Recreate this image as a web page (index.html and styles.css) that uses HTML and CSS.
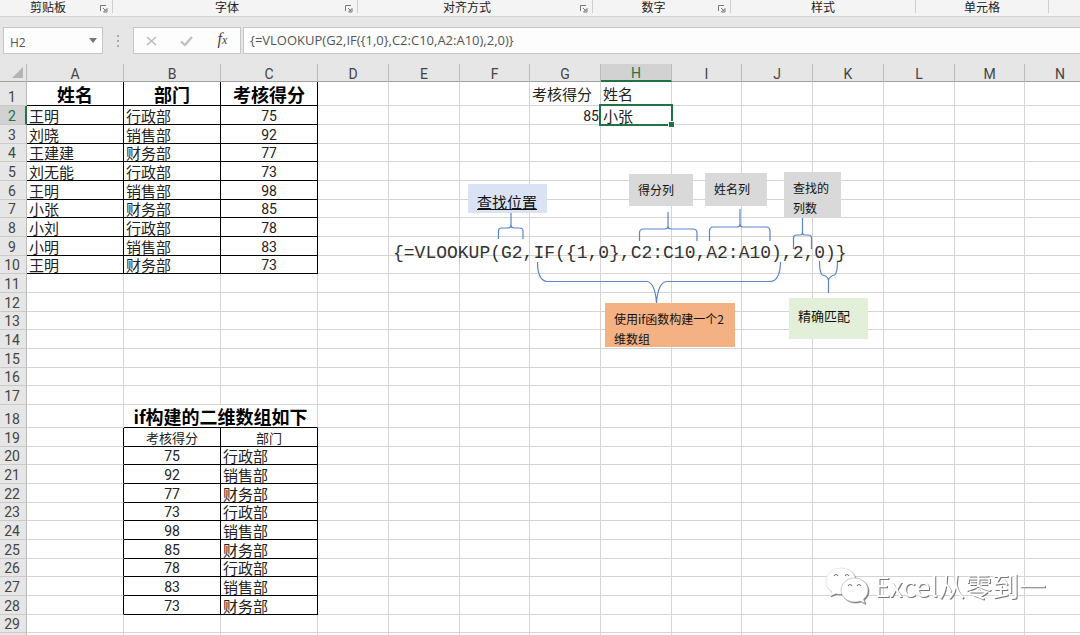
FILE: index.html
```html
<!DOCTYPE html>
<html lang="zh-CN">
<head>
<meta charset="utf-8">
<title>Excel</title>
<link rel="stylesheet" href="styles.css">
</head>
<body>
<svg class="defs" aria-hidden="true">
  <symbol id="launcher" viewBox="0 0 8 8"><path d="M.5 6V.5H6M3 3l3 3M7 3.500V7H3.500z" /></symbol>
</svg>

<header class="ribbon">
  <div class="group"><span>剪贴板</span><button class="launch" aria-label="剪贴板设置"><svg><use href="#launcher"/></svg></button></div>
  <div class="group"><span>字体</span><button class="launch" aria-label="字体设置"><svg><use href="#launcher"/></svg></button></div>
  <div class="group"><span>对齐方式</span><button class="launch" aria-label="对齐设置"><svg><use href="#launcher"/></svg></button></div>
  <div class="group"><span>数字</span><button class="launch" aria-label="数字格式"><svg><use href="#launcher"/></svg></button></div>
  <div class="group"><span>样式</span></div>
  <div class="group"><span>单元格</span></div>
  <div></div>
</header>

<section class="bar">
  <div class="name-box">
    <select aria-label="名称框"><option>H2</option></select>
    <svg class="caret" viewBox="0 0 8 5"><path d="M0 0h8L4 5z"/></svg>
  </div>
  <svg class="dots" viewBox="0 0 2 12"><path d="M0 0h2v2H0zM0 5h2v2H0zM0 10h2v2H0z"/></svg>
  <div class="tools">
    <button aria-label="取消"><svg viewBox="0 0 14 14"><path d="M2 3l9 8M11 3L2 11" stroke="#bdbdbd" stroke-width="1.600"/></svg></button>
    <button aria-label="输入"><svg viewBox="0 0 14 14"><path d="M1 7.500l4 3.500L12 3" stroke="#bdbdbd" stroke-width="2.200"/></svg></button>
    <button class="fx" aria-label="插入函数"><i>f</i><small>x</small></button>
  </div>
  <input class="formula-input" aria-label="编辑栏" value="{=VLOOKUP(G2,IF({1,0},C2:C10,A2:A10),2,0)}">
</section>

<main class="sheet">
  <table class="grid">
    <colgroup><col class="c-head"><col class="c-wide" span="3"><col class="c-71" span="2"><col class="c-70"><col class="c-71" span="2"><col class="c-70"><col class="c-71" span="3"><col class="c-70"><col></colgroup>
    <thead>
      <tr><th class="corner"><svg viewBox="0 0 11 11"><path d="M11 0v11H0z"/></svg></th><th>A</th><th>B</th><th>C</th><th>D</th><th>E</th><th>F</th><th>G</th><th class="active">H</th><th>I</th><th>J</th><th>K</th><th>L</th><th>M</th><th>N</th></tr>
    </thead>
    <tbody id="rows"></tbody>
  </table>

  <div class="canvas">
    <svg class="braces" viewBox="0 0 480 140">
      <path d="M108.500 75V67q0-3 3-3H118q3 0 3-3V49v12q0 3 3 3h6q3 0 3 3v8"/>
      <path d="M249.500 77V69q0-4 4-4H275q3 0 3-3V48v14q0 3 3 3h22q4 0 4 4v8"/>
      <path d="M319.500 77V67q0-4 4-4H347q3 0 3-3V45v15q0 3 3 3h23q4 0 4 4v10"/>
      <path d="M403.500 85V74q0-3 3-3h4q2 0 2-3V54v14q0 3 2 3h4q3 0 3 3v11"/>
      <path d="M147.500 98q0 19 10 19.500H256q9 0 10.500 21.500q1.500-21.500 11-21.500H380q10 0 10.500-19.500"/>
      <path d="M429.500 97q0 12 3 14 5 1 6 5V129V116q1-4 6-5 3-2 3-14"/>
    </svg>
    <div class="formula">{=VLOOKUP(G2,IF({1,0},C2:C10,A2:A10),2,0)}</div>
    <div class="note lookup">查找位置</div>
    <div class="note score">得分列</div>
    <div class="note name">姓名列</div>
    <div class="note index">查找的<br>列数</div>
    <div class="note array">使用if函数构建一个2<br>维数组</div>
    <div class="note exact">精确匹配</div>
  </div>
</main>

<div class="mark">
  <svg viewBox="0 0 44 38">
    <path d="M16 2C7.500 2 1 8 1 15.500c0 4.500 2.500 8 6 10.500l-2 4 6-2.500c2 .5 4 .7 6 .5C29 27 31 20 31 15 30 7 24 2 16 2z"/>
    <path d="M29.500 12C22 12 16 17.500 16 24s6 12 13.500 12c2 0 4-.3 5.500-1l5 2.500-1.500-4.500c3-2 4.500-5 4.500-9 0-6.500-6-12-13.500-12z"/>
    <path class="eye" d="M9 10q2-3 4 0M20 10q2-3 4 0M23 20q2-3 4 0M32 20q2-3 4 0"/>
  </svg>
  <span>Excel从零到一</span>
</div>
<script src="sheet.js"></script>
</body>
</html>
```

FILE: styles.css
```css
* { box-sizing: border-box; }
body {
  margin: 0;
  height: 100vh;
  overflow: hidden;
  position: relative;
  display: flex;
  flex-direction: column;
  background: #e6e6e6;
  color: #222;
  font-family: "Noto Sans CJK SC", sans-serif;
}
button { border: 0; padding: 0; background: none; color: inherit; font: inherit; }
svg { display: block; fill: none; }
.defs { display: none; }

.ribbon {
  display: grid;
  grid-template-columns: 113px 245px 235px 138px 185px 133px 1fr;
  flex: none;
  height: 17px;
  background: #f4f4f4;
  border-bottom: 1px solid #d4d4d4;
  font-size: 12px;
  line-height: 13px;
}
.group { display: flex; height: 13px; border-right: 1px solid #cfcfcf; }
.group span { flex: 1; text-align: center; }
.launch { width: 12px; padding: 4px 0 0 4px; margin: 0 4px 0 0; }
.launch svg { width: 8px; height: 8px; stroke: #777; }

.bar { flex: none; display: flex; height: 27px; margin: 10px 0 10px 3px; }
.name-box, .tools, .formula-input { background: #fdfdfd; border: 1px solid #c6c6c6; }
.name-box { position: relative; width: 100px; }
.name-box select {
  appearance: none;
  width: 100%;
  height: 100%;
  border: 0;
  padding: 0 6px 2px;
  background: none;
  color: #555;
  font: 12px "Open Sans", sans-serif;
}
.caret { position: absolute; right: 5px; top: 10px; width: 8px; height: 5px; fill: #777; pointer-events: none; }
.dots { width: 2px; height: 12px; margin: 8px 14px; fill: #aaa; }
.tools { display: flex; width: 108px; margin-right: 2px; }
.tools button { flex: 1; display: flex; align-items: center; justify-content: center; }
.tools svg { width: 14px; height: 14px; }
.tools .fx { align-items: baseline; color: #444; font: 16px/22px "Liberation Serif", serif; }
.fx small { font-size: 12px; font-style: italic; }
.formula-input { flex: 1; min-width: 0; padding: 0 6px 2px; border-right: 0; color: #555; font: 13px "Open Sans", sans-serif; }

.sheet { position: relative; flex: 1; min-height: 0; overflow: hidden; background: #fff; }
.grid { width: calc(100% + 16px); table-layout: fixed; border-collapse: separate; border-spacing: 0; }
.c-head { width: 27px; }
.c-wide { width: 97px; }
.c-71 { width: 71px; }
.c-70 { width: 70px; }
.grid th, .grid td { padding: 0; border: 0 solid #d4d4d4; border-width: 0 1px 1px 0; white-space: nowrap; vertical-align: bottom; }
.grid th { background: #e6e6e6; border-color: #bbb; color: #444; font: 14px/15px Roboto, sans-serif; }
.grid thead th { height: 18px; border-bottom-color: #9f9f9f; line-height: 14px; }
.grid tbody th { padding-right: 2px; border-bottom-color: #cacaca; }
.grid .corner svg { width: 11px; height: 11px; margin: 0 3px 3px auto; fill: #b4b4b4; }
.grid thead .active { background: #d2d2d2; color: #217346; border-bottom: 2px solid #217346; line-height: 13px; }
.grid tbody .active { background: #d2d2d2; color: #217346; border-right: 2px solid #217346; padding-right: 1px; }
tbody tr { height: 19px; }
tbody tr:nth-child(3n+4):nth-child(-n+16), tbody tr:nth-child(3n+20) { height: 18px; }
tbody tr:nth-child(1) { height: 24px; }
tbody tr:nth-child(18) { height: 23px; }
.grid td { padding-left: 2px; font-size: 15px; line-height: 17px; }
.grid .num { padding: 0; text-align: center; font: 14px/15px Roboto, sans-serif; }
.grid .right { padding-right: 1px; text-align: right; font: 14px/15px Roboto, sans-serif; }
.grid .mid { vertical-align: middle; }
.grid .title { padding: 0; text-align: center; font-size: 18px; font-weight: bold; line-height: 22px; color: #000; }
.grid .small { padding: 0; text-align: center; font-size: 13px; }
.grid .box { border-color: #000; }
.grid .edge { border-right-color: #000; }
.grid .under { border-bottom-color: #000; border-right-color: #d4d4d4; }
.grid .selected { position: relative; }
.selected::before { content: ""; position: absolute; inset: -2px; border: 2px solid #217346; }
.selected::after { content: ""; position: absolute; right: -3px; bottom: -3px; width: 5px; height: 5px; background: #217346; outline: 1px solid #fff; }

.canvas { position: absolute; left: 390px; top: 100px; width: 480px; height: 190px; color: #111; }
.braces { position: absolute; left: 0; top: 0; width: 480px; height: 140px; stroke: #5b84cb; stroke-width: 1.200; }
.formula { position: absolute; left: 3px; top: 78px; color: #333; font: 18px/22px "Liberation Mono", monospace; white-space: nowrap; }
.note { position: absolute; padding: 6px 9px; background: #d9d9d9; font-size: 12px; line-height: 20px; white-space: nowrap; overflow: hidden; }
.lookup { left: 78px; top: 20px; width: 79px; height: 29px; padding-top: 8px; background: #dae3f3; font-size: 15px; text-decoration: underline; }
.score { left: 239px; top: 10px; width: 64px; height: 32px; }
.name { left: 315px; top: 9px; width: 62px; height: 33px; }
.index { left: 394px; top: 8px; width: 57px; height: 46px; }
.array { left: 215px; top: 139px; width: 130px; height: 44px; background: #f4b183; }
.exact { left: 399px; top: 134px; width: 79px; height: 41px; padding-top: 8px; background: #e2f0d9; font-size: 13px; }

.mark { position: absolute; right: 34px; bottom: 30px; display: flex; align-items: center; gap: 5px; color: #fff; font-size: 27px; line-height: 38px; filter: drop-shadow(1px 1px 0 #777); white-space: nowrap; }
.mark svg { width: 44px; height: 38px; margin-top: -2px; fill: #fff; overflow: visible; }
.mark path { stroke: #ddd; stroke-width: .6; }
.mark path + path { stroke: #aaa; }
.mark .eye { fill: none; stroke: #777; stroke-width: 1.200; }
```

FILE: sheet.js
```js
const people = [
  ["王明", "行政部", 75], ["刘晓", "销售部", 92], ["王建建", "财务部", 77],
  ["刘无能", "行政部", 73], ["王明", "销售部", 98], ["小张", "财务部", 85],
  ["小刘", "行政部", 78], ["小明", "销售部", 83], ["王明", "财务部", 73]
];
const cells = {
  A1: ["姓名", "title box"], B1: ["部门", "title box"], C1: ["考核得分", "title box"],
  G1: ["考核得分", "mid"], H1: ["姓名", "mid"], G2: [85, "right"], H2: ["小张", "selected"],
  B18: ["if构建的二维数组如下", "title under", 2],
  A19: ["", "edge"], B19: ["考核得分", "small box"], C19: ["部门", "small box"]
};
people.forEach(([name, dept, score], i) => {
  cells["A" + (i + 2)] = [name, "box"];
  cells["B" + (i + 2)] = [dept, "box"];
  cells["C" + (i + 2)] = [score, "num box"];
  cells["A" + (i + 20)] = ["", "edge"];
  cells["B" + (i + 20)] = [score, "num box"];
  cells["C" + (i + 20)] = [dept, "box"];
});
const body = document.getElementById("rows");
for (let r = 1; r <= 30; r++) {
  const row = body.insertRow();
  const head = document.createElement("th");
  head.textContent = r < 30 ? r : "";
  if (r === 2) head.className = "active";
  row.append(head);
  for (let c = 0; c < 14; c++) {
    const [text, style, span] = cells["ABCDEFGHIJKLMN"[c] + r] || ["", ""];
    const cell = row.insertCell();
    cell.textContent = text;
    if (style) cell.className = style;
    if (span) { cell.colSpan = span; c += span - 1; }
  }
}
```
